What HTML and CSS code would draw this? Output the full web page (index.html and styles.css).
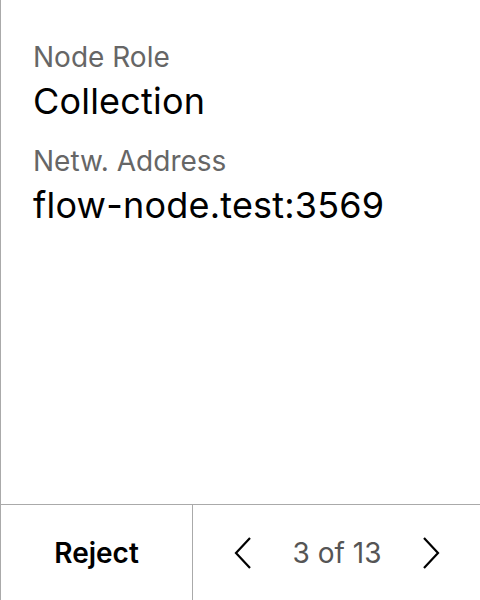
FILE: index.html
```html
<!DOCTYPE html>
<html>
<head>
<meta charset="utf-8">
<link rel="stylesheet" href="styles.css">
</head>
<body>
<div class="panel">
  <div class="content">
    <div class="field">
      <div class="label">Node Role</div>
      <div class="value">Collection</div>
    </div>
    <div class="field">
      <div class="label">Netw. Address</div>
      <div class="value">flow-node.test:3569</div>
    </div>
  </div>
  <div class="footer">
    <div class="reject">Reject</div>
    <div class="pager">
      <svg class="chev" width="18" height="32" viewBox="0 0 18 32"><path d="M16 1 L2 16 L16 31" fill="none" stroke="#000" stroke-width="2.2"/></svg>
      <span class="count">3 of 13</span>
      <svg class="chev" width="18" height="32" viewBox="0 0 18 32"><path d="M2 1 L16 16 L2 31" fill="none" stroke="#000" stroke-width="2.2"/></svg>
    </div>
  </div>
</div>
</body>
</html>
```
FILE: styles.css
```css
* { box-sizing: border-box; }
html, body { margin: 0; padding: 0; background: #fff; }
body { font-family: Inter, "Noto Sans", sans-serif; }
.panel {
  width: 480px;
  height: 600px;
  display: flex;
  flex-direction: column;
  border-left: 1px solid #aaa;
}
.content {
  flex: 1;
  padding: 40px 32px 0 32px;
  display: flex;
  flex-direction: column;
  gap: 21px;
}
.field { display: flex; flex-direction: column; gap: 5px; }
.label { font-size: 28px; line-height: 34px; color: #666; }
.value { font-size: 36px; line-height: 44px; color: #000; letter-spacing: 0.2px; }
.footer {
  height: 96px;
  border-top: 1px solid #aaa;
  display: grid;
  grid-template-columns: 192px 1fr;
}
.reject {
  display: flex;
  align-items: center;
  justify-content: center;
  font-size: 28px;
  font-weight: 600;
  color: #000;
  border-right: 1px solid #aaa;
}
.pager {
  display: flex;
  align-items: center;
  justify-content: space-between;
  padding: 0 40px 0 41px;
}
.count { font-size: 28px; color: #555; }
```
